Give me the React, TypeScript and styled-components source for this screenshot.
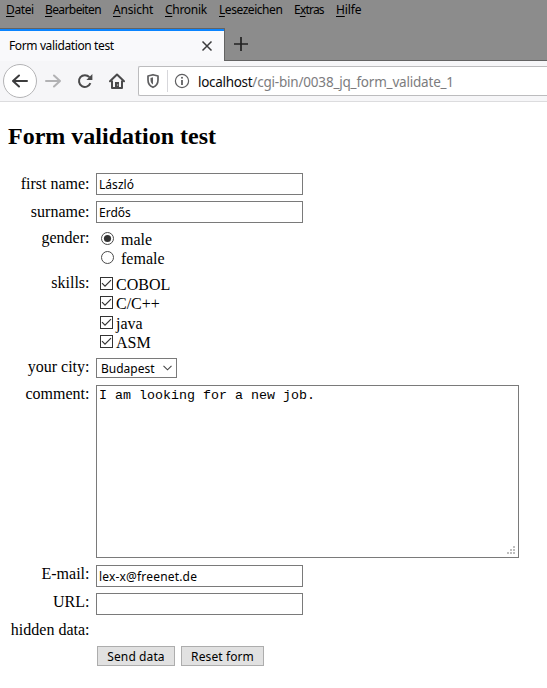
import React from "react";
import styled, { createGlobalStyle } from "styled-components";

const Global = createGlobalStyle`
  * { box-sizing: border-box; }
  html, body { margin: 0; background: #fff; overflow: hidden; }
`;

const ui = `"Noto Sans", "Open Sans", sans-serif`;
const serif = `"Liberation Serif", serif`;

const Window = styled.div`
  width: 547px;
  height: 688px;
  overflow: hidden;
  background: #fff;
  color: #000;
`;

const Text = styled.span<{ $ls?: number }>`
  letter-spacing: ${(p) => p.$ls ?? 0}px;
  white-space: pre;
`;

const TitleArea = styled.header`
  height: 61px;
  background: #8c8c8c;
  display: flex;
  flex-direction: column;
`;

const Menu = styled.nav`
  height: 28px;
  padding-left: 6px;
  display: flex;
  font: 12px/20px ${ui};
`;

const MenuItem = styled.span<{ $w: number; $ls: number }>`
  width: ${(p) => p.$w}px;
  flex: none;
  letter-spacing: ${(p) => p.$ls}px;
  white-space: nowrap;
  u { text-underline-offset: 2px; text-decoration-thickness: 1px; text-decoration-skip-ink: none; }
`;

const TabStrip = styled.div`
  height: 33px;
  display: flex;
`;

const Tab = styled.div`
  width: 225px;
  height: 33px;
  padding: 3px 11px 0 9px;
  background: linear-gradient(#636363 0 1px, #0a84ff 1px 3px, #f9f9fb 3px);
  border-right: 1px solid #636363;
  display: flex;
  align-items: center;
  justify-content: space-between;
  font: 12px/16px ${ui};
`;

const NewTab = styled.div`
  flex: 1;
  padding: 8px 0 0 8px;
  border-bottom: 1px solid #636363;
`;

const Toolbar = styled.div`
  height: 41px;
  background: #f6f6f8;
  border-bottom: 1px solid #dcdcde;
  padding: 2px 0 0 3px;
  display: flex;
`;

const BackButton = styled.div`
  width: 34px;
  height: 34px;
  margin-top: 1px;
  border: 1px solid #b4b4b6;
  border-radius: 50%;
  background: #fff;
  display: grid;
  place-items: center;
`;

const ToolIcon = styled.div<{ $gap: number }>`
  width: 16px;
  height: 16px;
  margin: 10px 0 0 ${(p) => p.$gap}px;
  svg { display: block; }
`;

const UrlBar = styled.div`
  flex: 1;
  height: 30px;
  margin: 3px 0 0 13px;
  border: 1px solid #bcbcbe;
  border-right: 0;
  border-radius: 2px 0 0 2px;
  background: #fff;
  display: flex;
  align-items: center;
  padding-left: 6px;
  font: 13.5px/20px ${ui};
  color: #0c0c0d;
  svg { display: block; flex: none; }
`;

const Divider = styled.div`
  width: 1px;
  height: 22px;
  margin: 0 6px;
  background: #d7d7db;
`;

const Url = styled.div`
  margin: 2px 0 0 8px;
  white-space: nowrap;
`;

const Path = styled(Text)`
  color: #7c7c7e;
`;

const Page = styled.main`
  padding-top: 20px;
  font: 16px/18px ${serif};
`;

const Heading = styled.h2`
  height: 51px;
  margin: 0 0 0 8px;
  font: bold 24px/28px ${serif};
`;

const Row = styled.div<{ $h: number }>`
  display: grid;
  grid-template-columns: 89.5px 1fr;
  column-gap: 6.5px;
  height: ${(p) => p.$h}px;
`;

const Label = styled.div<{ $top?: number }>`
  padding-top: ${(p) => p.$top ?? 0}px;
  text-align: right;
  white-space: nowrap;
`;

const Field = styled.div`
  width: 207px;
  height: 22px;
  padding-left: 2px;
  border: 1px solid #7a7a7a;
  background: #fff;
  font: 12px/21px ${ui};
`;

const Options = styled.div<{ $top: number }>`
  padding: ${(p) => p.$top}px 0 0 4px;
`;

const Option = styled.div<{ $h: number; $gap: number }>`
  display: flex;
  height: ${(p) => p.$h}px;
  gap: ${(p) => p.$gap}px;
  svg { flex: none; display: block; }
`;

const OptionText = styled.span<{ $lift?: number }>`
  margin-top: ${(p) => -(p.$lift ?? 0)}px;
  line-height: 18px;
`;

const Select = styled.div`
  width: 81px;
  height: 20px;
  padding: 0 4px;
  border: 1px solid #7a7a7a;
  display: flex;
  align-items: center;
  justify-content: space-between;
  font: 12px/18px ${ui};
`;

const SelectText = styled(Text)`
  margin-top: 1px;
`;

const TextArea = styled.div`
  width: 423px;
  height: 173px;
  padding: 2px;
  border: 1px solid #7a7a7a;
  display: flex;
  justify-content: space-between;
  font: 13.333px/15px "Liberation Mono", monospace;
  white-space: pre;
  svg { align-self: flex-end; }
`;

const Buttons = styled.div`
  display: flex;
  gap: 6px;
  padding-left: 1px;
`;

const Button = styled.div<{ $w: number }>`
  width: ${(p) => p.$w}px;
  height: 20px;
  border: 1px solid #adadad;
  background: #e1e1e1;
  text-align: center;
  letter-spacing: 0.1px;
  font: 12px/19px ${ui};
`;

const Arrow = ({ color, flip }: { color: string; flip?: boolean }) => (
  <svg width="16" height="16" viewBox="0 0 16 16" fill="none" stroke={color} strokeWidth="2" strokeLinecap="round" strokeLinejoin="round">
    <path d={flip ? "M1 8H15M9 2.5L15 8L9 13.5" : "M15 8H1M7 2.5L1 8L7 13.5"} />
  </svg>
);

const Radio = ({ checked }: { checked?: boolean }) => (
  <svg width="14" height="14" viewBox="0 0 14 14">
    <circle cx="7.5" cy="7.5" r="6" fill="#fff" stroke="#4a4a4a" />
    {checked && <circle cx="7.5" cy="7.5" r="3.6" fill="#333" />}
  </svg>
);

const Check = () => (
  <svg width="13" height="13" viewBox="0 0 13 13" fill="none">
    <rect x=".5" y=".5" width="12" height="12" fill="#fff" stroke="#333" />
    <path d="M2 6.2L5 9.2L11 3.2" stroke="#333" strokeWidth="1.2" />
  </svg>
);

const menu = [
  { a: "", k: "D", b: "atei", w: 39, ls: -0.4 },
  { a: "", k: "B", b: "earbeiten", w: 68, ls: -0.6 },
  { a: "", k: "A", b: "nsicht", w: 52, ls: -0.2 },
  { a: "", k: "C", b: "hronik", w: 54, ls: -0.3 },
  { a: "", k: "L", b: "esezeichen", w: 75, ls: -0.45 },
  { a: "E", k: "x", b: "tras", w: 42, ls: -0.8 },
  { a: "", k: "H", b: "ilfe", w: 40, ls: -0.1 },
];

const skills = [
  { name: "COBOL", h: 19, lift: 1 },
  { name: "C/C++", h: 20, lift: 1 },
  { name: "java", h: 19, lift: 1 },
  { name: "ASM", h: 19, lift: 1 },
];

export default function App() {
  return (
    <Window>
      <Global />
      <TitleArea>
        <Menu>
          {menu.map((m) => (
            <MenuItem key={m.k} $w={m.w} $ls={m.ls}>{m.a}<u>{m.k}</u>{m.b}</MenuItem>
          ))}
        </Menu>
        <TabStrip>
          <Tab>
            <Text $ls={-0.38}>Form validation test</Text>
            <svg width="12" height="12" viewBox="0 0 12 12" stroke="#3c3c3d" strokeWidth="1.5">
              <path d="M1.5 1.5L10.5 10.5M10.5 1.5L1.5 10.5" />
            </svg>
          </Tab>
          <NewTab>
            <svg width="16" height="16" viewBox="0 0 16 16" stroke="#222" strokeWidth="1.7">
              <path d="M8 1V15M1 8H15" />
            </svg>
          </NewTab>
        </TabStrip>
      </TitleArea>
      <Toolbar>
        <BackButton><Arrow color="#3c3c3d" /></BackButton>
        <ToolIcon $gap={8}><Arrow color="#b2b2b4" flip /></ToolIcon>
        <ToolIcon $gap={16}>
          <svg width="16" height="16" viewBox="0 0 16 16" fill="none" stroke="#4a4a4b" strokeWidth="2">
            <path d="M13.4 10.2A5.9 5.9 0 1 1 12.4 4.2" />
            <path d="M15.4 1V7H9.4Z" fill="#4a4a4b" stroke="none" />
          </svg>
        </ToolIcon>
        <ToolIcon $gap={16}>
          <svg width="16" height="16" viewBox="0 0 16 16" fill="none" stroke="#4a4a4b">
            <path d="M1 8.3L8 1.5L15 8.3" strokeWidth="2" strokeLinecap="round" strokeLinejoin="round" />
            <path d="M3 7.5V15H13V7.5" strokeWidth="2" strokeLinejoin="round" />
            <path d="M6 15V9H10V15Z" fill="#4a4a4b" stroke="none" />
            <path d="M8.2 11.5h1v1h-1z" fill="#fff" stroke="none" />
          </svg>
        </ToolIcon>
        <UrlBar>
          <svg width="16" height="16" viewBox="0 0 16 16" fill="none" stroke="#5f5f61" strokeWidth="1.7">
            <path d="M8 1.7L13 3V7C13 10.5 11.2 13 8 14.3C4.8 13 3 10.5 3 7V3Z" strokeLinejoin="round" />
            <path d="M8 4.2L5.5 4.9V7C5.5 9.3 6.5 10.7 8 11.6Z" fill="#5f5f61" stroke="none" />
          </svg>
          <Divider />
          <svg width="16" height="16" viewBox="0 0 16 16" fill="none" stroke="#5f5f61">
            <circle cx="8" cy="8" r="6.6" strokeWidth="1.2" />
            <path d="M8 7V12" strokeWidth="1.8" />
            <circle cx="8" cy="4.7" r="1" fill="#5f5f61" stroke="none" />
          </svg>
          <Url><Text $ls={-0.3}>localhost</Text><Path $ls={-0.2}>/cgi-bin/0038_jq_form_validate_1</Path></Url>
        </UrlBar>
      </Toolbar>
      <Page>
        <Heading>Form validation test</Heading>
        <Row $h={28}><Label $top={2}>first name:</Label><Field><Text $ls={0.05}>László</Text></Field></Row>
        <Row $h={28}><Label $top={2}>surname:</Label><Field><Text>Erdős</Text></Field></Row>
        <Row $h={45}>
          <Label>gender:</Label>
          <Options $top={2}>
            <Option $h={19} $gap={7}><Radio checked /><OptionText>male</OptionText></Option>
            <Option $h={19} $gap={7}><Radio /><OptionText>female</OptionText></Option>
          </Options>
        </Row>
        <Row $h={84}>
          <Label>skills:</Label>
          <Options $top={3}>
            {skills.map((s) => (
              <Option key={s.name} $h={s.h} $gap={3}><Check /><OptionText $lift={s.lift}>{s.name}</OptionText></Option>
            ))}
          </Options>
        </Row>
        <Row $h={27}>
          <Label>your city:</Label>
          <Select>
            <SelectText>Budapest</SelectText>
            <svg width="9" height="6" viewBox="0 0 9 6" fill="none" stroke="#444" strokeWidth="1.1"><path d="M.5 .8L4.5 4.8L8.5 .8" /></svg>
          </Select>
        </Row>
        <Row $h={180}>
          <Label>comment:</Label>
          <TextArea>
            <span>I am looking for a new job.</span>
            <svg width="9" height="9" viewBox="0 0 9 9" fill="#bfbfbf">
              <path d="M6 0h2v2h-2zM3 3h2v2h-2zM6 3h2v2h-2zM0 6h2v2h-2zM3 6h2v2h-2zM6 6h2v2h-2z" />
            </svg>
          </TextArea>
        </Row>
        <Row $h={28}><Label>E-mail:</Label><Field><Text $ls={0.18}>lex-x@freenet.de</Text></Field></Row>
        <Row $h={28}><Label>URL:</Label><Field /></Row>
        <Row $h={25}><Label>hidden data:</Label></Row>
        <Row $h={20}>
          <div />
          <Buttons>
            <Button $w={78}>Send data</Button>
            <Button $w={83}>Reset form</Button>
          </Buttons>
        </Row>
      </Page>
    </Window>
  );
}
